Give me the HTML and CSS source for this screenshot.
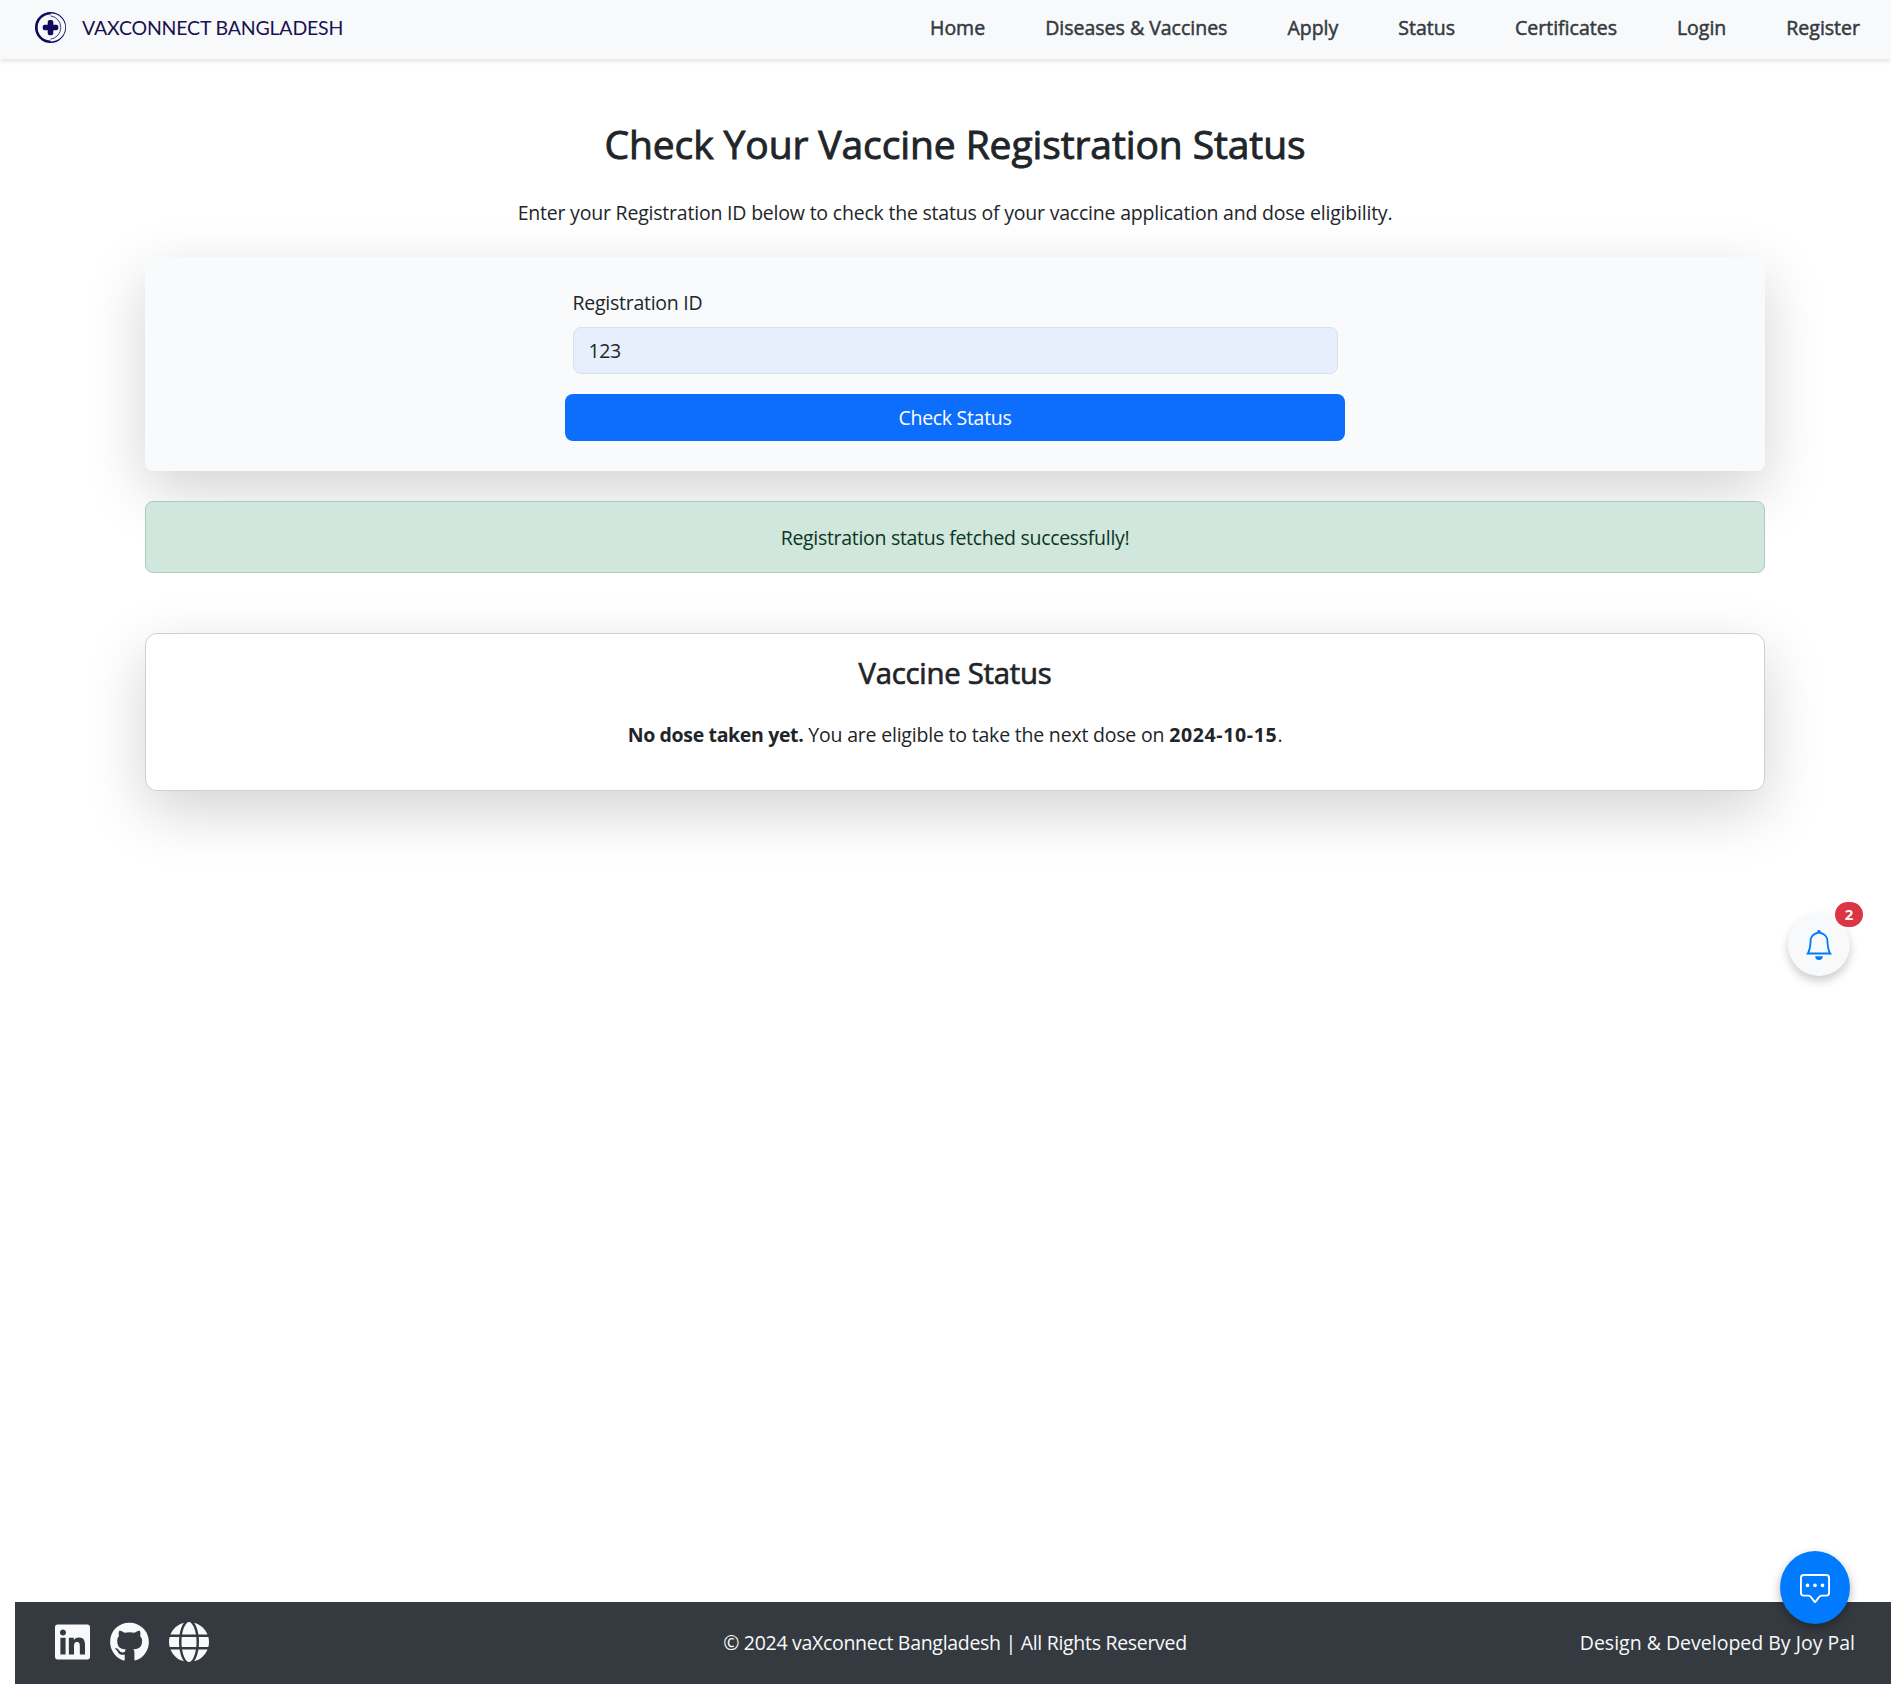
FILE: index.html
```html
<!DOCTYPE html>
<html lang="en">
<head>
<meta charset="utf-8">
<title>VaxConnect Bangladesh</title>
<link rel="stylesheet" href="styles.css">
</head>
<body>
<header class="navbar">
  <a class="brand">
    <svg class="brand-icon" viewBox="0 0 31 31">
      <path fill-rule="evenodd" d="M15.500 0A15.500 15.500 0 1 0 15.500 31A15.500 15.500 0 1 0 15.500 0ZM16.300 1.600A13.900 13.900 0 0 1 16.300 29.400A13.900 13.900 0 0 1 16.300 1.600Z"/>
      <path d="M15.500 0.500A15 15 0 0 0 15.500 30.500V28.500A13 13 0 0 1 15.500 2.500Z"/>
      <path class="brand-arc" d="M15.500 3.800A11.800 11.800 0 0 1 15.500 27.200"/>
      <path d="M12.700 10a2 2 0 0 1 2-2h1.600a2 2 0 0 1 2 2v2.700h3a2 2 0 0 1 2 2v1.600a2 2 0 0 1-2 2h-3v3a2 2 0 0 1-2 2h-1.600a2 2 0 0 1-2-2v-3h-3a2 2 0 0 1-2-2v-1.600a2 2 0 0 1 2-2h3z"/>
    </svg>
    <span class="brand-name">VAXCONNECT BANGLADESH</span>
  </a>
  <nav class="nav-links">
    <a>Home</a>
    <a>Diseases &amp; Vaccines</a>
    <a>Apply</a>
    <a>Status</a>
    <a>Certificates</a>
    <a>Login</a>
    <a>Register</a>
  </nav>
</header>

<main class="page">
  <h1 class="title">Check Your Vaccine Registration Status</h1>
  <p class="intro">Enter your Registration ID below to check the status of your vaccine application and dose eligibility.</p>

  <form class="panel">
    <div class="field">
      <label class="label" for="reg-id">Registration ID</label>
      <input class="input" id="reg-id" type="text" value="123">
    </div>
    <button class="submit" type="button">Check Status</button>
  </form>

  <div class="alert">Registration status fetched successfully!</div>

  <section class="card">
    <h2 class="card-title">Vaccine Status</h2>
    <p class="card-text"><strong class="dose">No dose taken yet.</strong> You are eligible to take the next dose on <strong class="date">2024-10-15</strong>.</p>
  </section>
</main>

<footer class="footer">
  <div class="social">
    <svg class="linkedin" viewBox="0 0 448 512"><path d="M416 32H31.900C14.300 32 0 46.500 0 64.300v383.400C0 465.500 14.300 480 31.900 480H416c17.600 0 32-14.500 32-32.300V64.300c0-17.800-14.400-32.300-32-32.300zM135.400 416H69V202.200h66.500V416zm-33.200-243c-21.300 0-38.500-17.300-38.500-38.500S80.900 96 102.200 96c21.200 0 38.500 17.300 38.500 38.500 0 21.300-17.200 38.500-38.500 38.500zm282.100 243h-66.400V312c0-24.800-.5-56.700-34.500-56.700-34.600 0-39.900 27-39.900 54.900V416h-66.400V202.200h63.700v29.200h.9c8.900-16.800 30.600-34.500 62.900-34.500 67.200 0 79.700 44.300 79.700 101.900V416z"/></svg>
    <svg class="github" viewBox="0 0 496 512"><path d="M244.800 8C106.100 8 0 113.300 0 252c0 110.900 69.800 205.800 169.500 239.200 12.800 2.300 17.300-5.600 17.300-12.100 0-6.200-.3-40.400-.3-61.400 0 0-70 15-84.700-29.800 0 0-11.400-29.100-27.800-36.600 0 0-22.900-15.700 1.600-15.400 0 0 24.900 2 38.600 25.800 21.900 38.600 58.600 27.500 72.900 20.900 2.300-16 8.800-27.100 16-33.700-55.900-6.200-112.300-14.300-112.300-110.500 0-27.500 7.600-41.300 23.600-58.900-2.600-6.500-11.100-33.300 2.600-67.900 20.900-6.500 69 27 69 27 20-5.600 41.500-8.500 62.800-8.500s42.800 2.900 62.800 8.500c0 0 48.100-33.600 69-27 13.700 34.700 5.200 61.400 2.600 67.900 16 17.700 25.800 31.500 25.800 58.900 0 96.500-58.900 104.200-114.800 110.500 9.200 7.900 17 22.900 17 46.400 0 33.700-.3 75.400-.3 83.600 0 6.500 4.600 14.400 17.300 12.100C428.200 457.800 496 362.900 496 252 496 113.300 383.500 8 244.800 8z"/></svg>
    <svg class="globe" viewBox="0 0 512 512"><path d="M352 256c0 22.200-1.200 43.600-3.300 64H163.300c-2.200-20.400-3.300-41.800-3.300-64s1.200-43.600 3.300-64H348.700c2.200 20.400 3.300 41.800 3.300 64zm28.800-64H503.900c5.300 20.500 8.100 41.900 8.100 64s-2.800 43.500-8.100 64H380.800c2.100-20.600 3.200-42 3.200-64s-1.100-43.400-3.200-64zm112.600-32H376.700c-10-63.900-29.800-117.400-55.300-151.600c78.300 20.700 142 77.500 171.900 151.600zm-149.100 0H167.700c6.100-36.400 15.500-68.600 27-94.700c10.500-23.600 22.200-40.700 33.500-51.500C239.400 3.200 248.700 0 256 0s16.600 3.200 27.800 13.800c11.300 10.800 23 27.900 33.500 51.500c11.600 26 20.900 58.200 27 94.700zm-209 0H18.600C48.600 85.900 112.200 29.100 190.600 8.400C165.100 42.600 145.300 96.100 135.300 160zM8.100 192H131.200c-2.100 20.600-3.200 42-3.200 64s1.100 43.400 3.200 64H8.100C2.800 299.500 0 278.100 0 256s2.800-43.500 8.100-64zM194.700 446.600c-11.600-26-20.900-58.200-27-94.600H344.300c-6.100 36.400-15.500 68.600-27 94.600c-10.500 23.600-22.200 40.700-33.500 51.500C272.600 508.800 263.300 512 256 512s-16.600-3.200-27.800-13.800c-11.300-10.800-23-27.900-33.500-51.500zM135.300 352c10 63.900 29.800 117.400 55.300 151.600C112.200 482.900 48.600 426.100 18.600 352H135.300zm358.100 0c-30 74.100-93.600 130.900-171.900 151.600c25.500-34.200 45.200-87.700 55.300-151.600H493.400z"/></svg>
  </div>
  <p class="copyright">© 2024 vaXconnect Bangladesh | All Rights Reserved</p>
  <p class="credit">Design &amp; Developed By Joy Pal</p>
</footer>

<div class="bell">
  <svg class="bell-icon" viewBox="0 0 16 16"><path d="M8 16a2 2 0 0 0 2-2H6a2 2 0 0 0 2 2M8 1.918l-.797.161A4 4 0 0 0 4 6c0 .628-.134 2.197-.459 3.742-.16.767-.376 1.566-.663 2.258h10.244c-.287-.692-.502-1.490-.663-2.258C12.134 8.197 12 6.628 12 6a4 4 0 0 0-3.203-3.920zM14.220 12c.223.447.481.801.78 1H1c.299-.199.557-.553.78-1C2.680 10.200 3 6.880 3 6c0-2.420 1.720-4.440 4.005-4.901a1 1 0 1 1 1.990 0A5 5 0 0 1 13 6c0 .88.32 4.200 1.220 6"/></svg>
  <span class="badge">2</span>
</div>
<div class="chat">
  <svg class="chat-icon" viewBox="0 0 16 16"><path d="M14 1a1 1 0 0 1 1 1v8a1 1 0 0 1-1 1h-2.500a2 2 0 0 0-1.600.8L8 14.333 6.100 11.800a2 2 0 0 0-1.600-.8H2a1 1 0 0 1-1-1V2a1 1 0 0 1 1-1zM2 0a2 2 0 0 0-2 2v8a2 2 0 0 0 2 2h2.500a1 1 0 0 1 .8.4l1.900 2.533a1 1 0 0 0 1.600 0l1.900-2.533a1 1 0 0 1 .8-.4H14a2 2 0 0 0 2-2V2a2 2 0 0 0-2-2z"/><path d="M5 6a1 1 0 1 1-2 0 1 1 0 0 1 2 0m4 0a1 1 0 1 1-2 0 1 1 0 0 1 2 0m4 0a1 1 0 1 1-2 0 1 1 0 0 1 2 0"/></svg>
</div>
</body>
</html>
```
FILE: styles.css
```css
* { box-sizing: border-box; }

body {
  margin: 0;
  height: 1684px;
  display: flex;
  flex-direction: column;
  position: relative;
  overflow: hidden;
  background: #fff;
  color: #212529;
  font: 400 19.500px/30px "Open Sans", "Noto Sans", sans-serif;
}

h1, h2, p { margin: 0; }
svg { display: block; }

.navbar {
  height: 59px;
  flex: none;
  display: flex;
  justify-content: space-between;
  align-items: center;
  padding: 0 31px 4px 35px;
  background: #f8f9fb;
  box-shadow: 0 2px 5px rgba(0, 0, 0, .12);
}
.brand { display: flex; align-items: center; gap: 16px; }
.brand-icon { width: 31px; height: 31px; fill: #120a5e; }
.brand-arc { fill: none; stroke: #120a5e; stroke-width: .8; }
.brand-name {
  padding-top: 1px;
  font-family: Lato, sans-serif;
  font-size: 19.500px;
  letter-spacing: -.18px;
  color: #1a1150;
  white-space: nowrap;
}
.nav-links {
  display: flex;
  gap: 60px;
  padding-top: 1px;
  color: #343a40;
  white-space: nowrap;
  -webkit-text-stroke: .5px #343a40;
}

.page { flex: 1; padding: 61px 126px 0 145px; text-align: center; }
.title {
  font-size: 39px;
  line-height: 48px;
  font-weight: 400;
  letter-spacing: -.1px;
  -webkit-text-stroke: .9px #212529;
}
.intro { margin: 30px 0 29px; letter-spacing: -.205px; }

.panel {
  height: 214px;
  display: flex;
  flex-direction: column;
  align-items: center;
  padding-top: 31px;
  border-radius: 8px;
  background: #f8fafc;
  box-shadow: 0 20px 60px rgba(0, 0, 0, .175);
}
.field { width: 765px; display: flex; flex-direction: column; text-align: left; }
.label { margin-bottom: 9px; letter-spacing: -.26px; }
.input {
  height: 47px;
  padding: 0 15px;
  border: 1px solid #dbe1e8;
  border-radius: 8px;
  background: #e8effc;
  color: #212529;
  font: inherit;
  letter-spacing: -.4px;
}
.submit {
  width: 780px;
  height: 47px;
  margin-top: 20px;
  border: 0;
  border-radius: 8px;
  background: #0d6efd;
  color: #fff;
  font: inherit;
  letter-spacing: -.3px;
}

.alert {
  position: relative;
  height: 72px;
  margin-top: 30px;
  padding-top: 21px;
  border: 1px solid #a9cdbd;
  border-radius: 8px;
  background: #d1e7dd;
  color: #0a3622;
  letter-spacing: -.3px;
}

.card {
  height: 158px;
  margin-top: 60px;
  padding-top: 21px;
  border: 1px solid #d0d0d1;
  border-radius: 12px;
  background: #fff;
  box-shadow: 0 20px 60px rgba(0, 0, 0, .175);
}
.card-title {
  font-size: 29.300px;
  line-height: 36px;
  font-weight: 400;
  letter-spacing: -.25px;
  -webkit-text-stroke: .7px #212529;
}
.card-text { margin-top: 29px; letter-spacing: -.2px; }
.dose { letter-spacing: -.35px; }
.date { letter-spacing: .65px; }

.footer {
  height: 82px;
  flex: none;
  display: grid;
  grid-template-columns: 1fr auto 1fr;
  margin: 0 -4px 0 15px;
  padding: 20px 40px 0;
  background: #343a40;
  color: #f8f9fa;
}
.social { display: flex; gap: 20px; }
.social svg { height: 40px; fill: #f8f9fa; }
.linkedin { width: 35px; }
.github { width: 39px; }
.globe { width: 40px; }
.copyright, .credit { padding-top: 6px; white-space: nowrap; }
.copyright { letter-spacing: -.3px; }
.credit { text-align: right; }

.bell {
  position: absolute;
  left: 1788px;
  top: 913px;
  width: 62px;
  height: 63px;
  display: grid;
  place-items: center;
  border-radius: 50%;
  background: #f8f9fa;
  box-shadow: 0 5px 10px rgba(0, 0, 0, .2);
}
.bell-icon { width: 30px; height: 30px; fill: #007bff; }
.badge {
  position: absolute;
  left: 47px;
  top: -11px;
  width: 28px;
  height: 25px;
  border-radius: 13px;
  background: #dc3545;
  color: #fff;
  font-size: 15px;
  font-weight: 700;
  line-height: 25px;
  text-align: center;
}

.chat {
  position: absolute;
  left: 1780px;
  top: 1551px;
  width: 70px;
  height: 73px;
  padding: 23px 20px 0;
  border-radius: 50%;
  background: #007bff;
  box-shadow: 0 4px 10px rgba(0, 0, 0, .3);
}
.chat-icon { width: 30px; height: 30px; fill: #fff; }
```
